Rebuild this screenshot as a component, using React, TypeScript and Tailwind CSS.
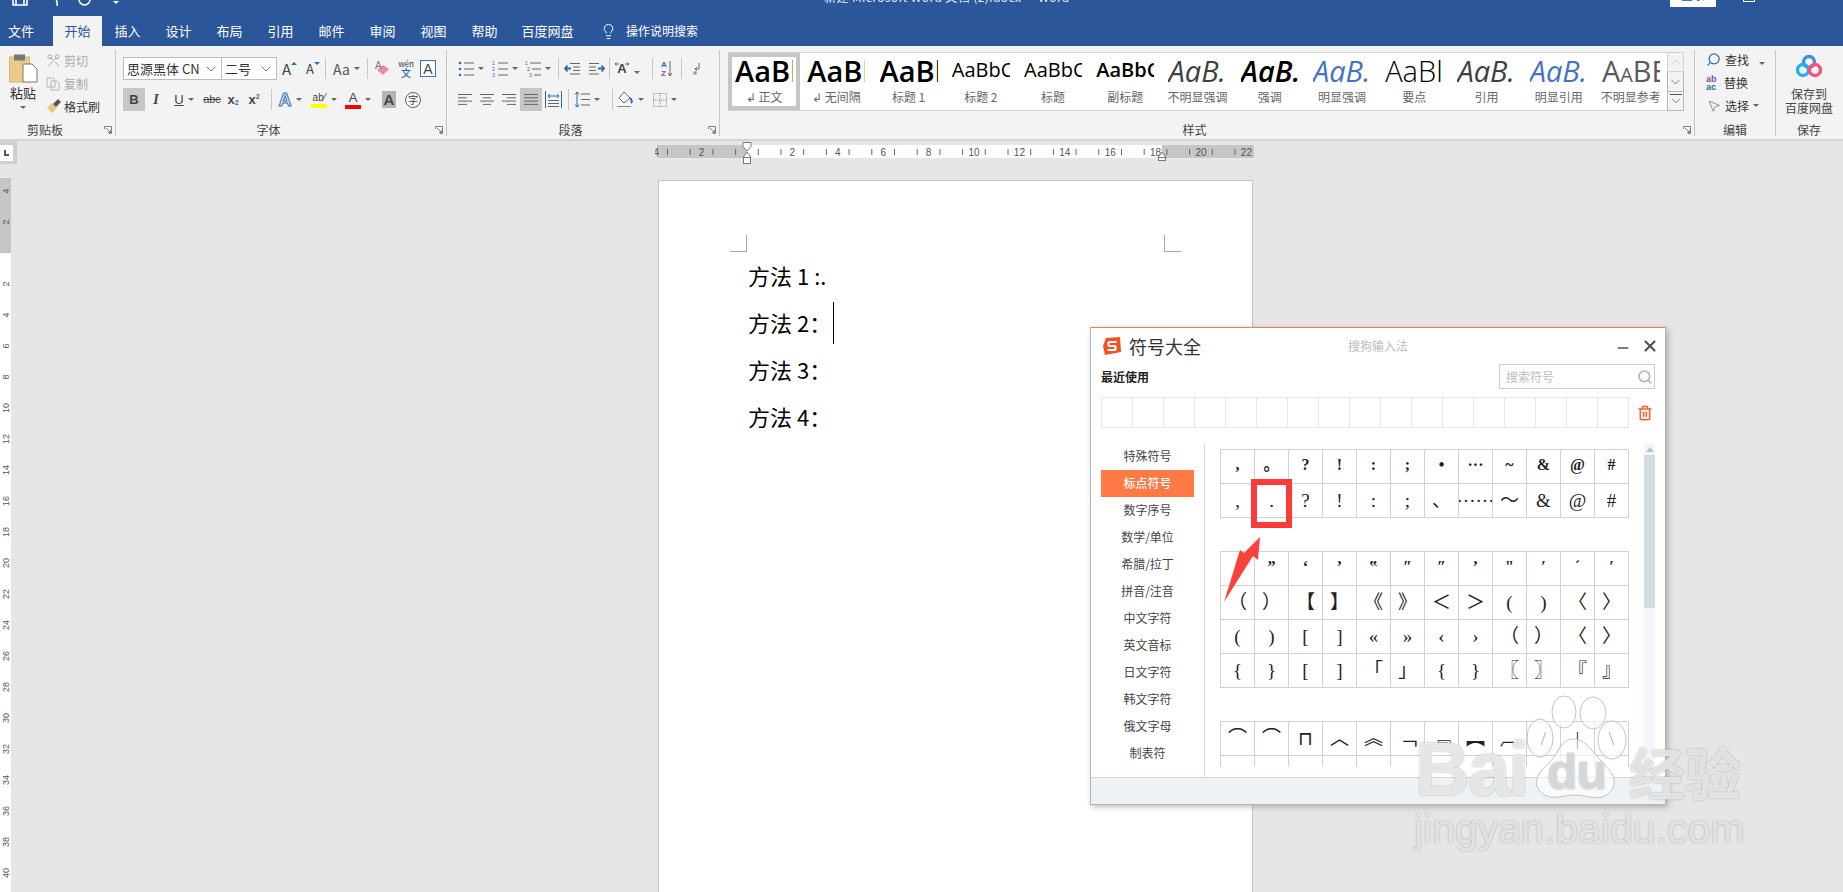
import { Scissors, Search, Trash2, MousePointer2, Lightbulb, ChevronDown, ChevronUp, X, Minus } from 'lucide-react'
import type { ReactNode } from 'react'

const tabs = ['插入', '设计', '布局', '引用', '邮件', '审阅', '视图', '帮助']

const styles = [
  { name: '↲ 正文', text: 'AaBl', cls: 'text-[29px] text-black font-semibold', selected: true },
  { name: '↲ 无间隔', text: 'AaBl', cls: 'text-[29px] text-black font-semibold' },
  { name: '标题 1', text: 'AaBl', cls: 'text-[29px] text-black font-semibold' },
  { name: '标题 2', text: 'AaBbC', cls: 'text-[20px] text-black' },
  { name: '标题', text: 'AaBbC', cls: 'text-[20px] text-black' },
  { name: '副标题', text: 'AaBbC', cls: 'text-[20px] text-black font-semibold' },
  { name: '不明显强调', text: 'AaB.', cls: 'text-[29px] text-[#404040] italic font-medium' },
  { name: '强调', text: 'AaB.', cls: 'text-[29px] text-black italic font-semibold' },
  { name: '明显强调', text: 'AaB.', cls: 'text-[29px] text-[#4472c4] italic font-medium' },
  { name: '要点', text: 'AaBl', cls: 'text-[29px] text-black font-light' },
  { name: '引用', text: 'AaB.', cls: 'text-[29px] text-[#404040] italic font-medium' },
  { name: '明显引用', text: 'AaB.', cls: 'text-[29px] text-[#4472c4] italic font-medium' },
  { name: '不明显参考', text: 'AaBE', cls: 'text-[29px] text-[#595959] font-medium [font-variant:small-caps]' },
]

const sideItems = ['特殊符号', '标点符号', '数字序号', '数学/单位', '希腊/拉丁', '拼音/注音', '中文字符', '英文音标', '日文字符', '韩文字符', '俄文字母', '制表符']

const group1 = [',', '。', '?', '!', ':', ';', '•', '···', '~', '&', '@', '#', ',', '.', '?', '!', ':', ';', '、', '······', '～', '&', '@', '#']
const group2 = ['‘', '”', '‘', '’', '‟', '″', '″', '’', '"', '′', '´', '′', '（', '）', '【', '】', '《', '》', '＜', '＞', '(', ')', '〈', '〉', '(', ')', '[', ']', '«', '»', '‹', '›', '（', '）', '〈', '〉', '{', '}', '[', ']', '「', '」', '{', '}', '〖', '〗', '『', '』']
const group3 = ['⌒', '⌒', '⊓', '︿', '︽', '﹁', '﹃', '︻', '︹', '/', '|', '\\', '', '', '', '', '', '', '', '', '', '', '', '']

function Caret() {
  return <span className="ml-[4px] inline-block h-0 w-0 border-x-[3px] border-t-[3px] border-x-transparent border-t-[#666]" />
}

function Sep({ h = 'h-[21px]' }: { h?: string }) {
  return <div className={`w-px shrink-0 bg-[#c8c8c8] ${h}`} />
}

function Lines({ kind }: { kind: 'left' | 'center' | 'right' | 'full' }) {
  const rows = kind === 'left' ? [[0, 14], [0, 9], [0, 14], [0, 9]] : kind === 'center' ? [[0, 14], [3, 11], [0, 14], [3, 11]] : kind === 'right' ? [[0, 14], [5, 14], [0, 14], [5, 14]] : [[0, 14], [0, 14], [0, 14], [0, 14]]
  return (
    <svg width="14" height="13" stroke="#666" strokeWidth="1">
      {rows.map((r, i) => <line key={i} x1={r[0]} x2={r[1]} y1={1.5 + i * 3.3} y2={1.5 + i * 3.3} />)}
    </svg>
  )
}

function ListIcon({ kind }: { kind: 'bullet' | 'number' | 'multi' }) {
  return (
    <svg width="16" height="16" fontSize="5" fontFamily="Liberation Sans" fill="#2b6cb0">
      {[2, 8, 14].map((y, i) => (
        <g key={y}>
          {kind === 'bullet' && <circle cx="2" cy={y} r="1.3" />}
          {kind === 'number' && <text x="0" y={y + 2}>{i + 1}</text>}
          {kind === 'multi' && <text x={i * 2} y={y + 2}>{i + 1}</text>}
          <line x1={kind === 'multi' ? 5 + i * 2 : 6} x2="16" y1={y} y2={y} stroke="#666" />
        </g>
      ))}
    </svg>
  )
}

function Launcher() {
  return (
    <svg width="8" height="8" className="shrink-0" fill="none" stroke="#666">
      <path d="M0.5 3V0.5H7.5V7.5H5M2 2L6.5 6.5M6.5 4V6.5H4" strokeWidth="0.8" />
    </svg>
  )
}

function Group({ width, label, children }: { width: string; label: string; children: ReactNode }) {
  return (
    <div className={`flex h-[86px] shrink-0 flex-col border-r border-[#c6c6c6] ${width}`}>
      <div className="min-h-0 flex-1">{children}</div>
      <div className="flex h-[14px] items-center pr-[3px] pt-[2px]">
        <span className="flex-1 pr-[14px] text-center text-[12px] leading-none text-[#444]">{label}</span>
        <Launcher />
      </div>
    </div>
  )
}

function Cell({ w, active, children }: { w: string; active?: boolean; children: ReactNode }) {
  return <div className={`flex h-[23px] shrink-0 items-center justify-center ${w} ${active ? 'bg-[#c6c6c6]' : ''}`}>{children}</div>
}

function Ruler() {
  const marks = []
  for (let i = -2; i <= 11; i++) marks.push(i)
  const x0 = 92
  const step = 45.4
  return (
    <svg width="600" height="24" className="block">
      <rect x="2" y="4" width="597" height="13" fill="#c6c6c6" />
      <rect x={x0} y="4" width="415" height="13" fill="#fff" />
      {marks.map((m) => (
        <g key={m}>
          {m !== 0 && (
            <text x={x0 + m * step} y="14.5" fontSize="10" fill="#555" textAnchor="middle" fontFamily="Liberation Sans">{Math.abs(m) * 2}</text>
          )}
          <line x1={x0 + m * step + 11.3} x2={x0 + m * step + 11.3} y1="8" y2="14" stroke="#666" />
          <line x1={x0 + m * step + 34} x2={x0 + m * step + 34} y1="8" y2="14" stroke="#666" />
        </g>
      ))}
      <path d="M88 1.5H96V5.5L92 10L88 5.5Z" fill="#fff" stroke="#777" />
      <path d="M88 16.5L92 11L96 16.5Z" fill="#fff" stroke="#777" />
      <rect x="88.5" y="16.5" width="7" height="6" fill="#fff" stroke="#777" />
      <path d="M503 16.5L507 11L511 16.5Z" fill="#fff" stroke="#777" />
      <rect x="503.5" y="16.5" width="7" height="3" fill="#fff" stroke="#777" />
    </svg>
  )
}

function VRuler() {
  const nums = []
  for (let i = -2; i <= 20; i++) if (i !== 0) nums.push(i)
  return (
    <svg width="11" height="714" className="block">
      <rect width="11" height="75" fill="#c6c6c6" />
      <rect y="75" width="11" height="640" fill="#fff" />
      {nums.map((n) => (
        <text key={n} x="0" y="0" fontSize="9" fill="#555" textAnchor="middle" fontFamily="Liberation Sans" transform={`translate(8.5 ${75 + n * 31}) rotate(-90)`}>{Math.abs(n) * 2}</text>
      ))}
    </svg>
  )
}

function SymbolGrid({ items, bold, big }: { items: string[]; bold?: boolean; big?: number }) {
  return (
    <div className="grid w-[409px] grid-cols-12 border-l border-t border-[#ccd3da]">
      {items.map((s, i) => (
        <div key={i} className={`flex h-[34px] items-center justify-center overflow-hidden border-b border-r border-[#ccd3da] font-['Liberation_Serif','Noto_Sans_CJK_SC',serif] leading-none text-[#222] ${bold && i < 12 ? 'pb-[3px] text-[16px] font-bold' : 'text-[19px]'} ${big !== undefined && i >= big ? 'text-[20px]' : ''}`}>
          {s}
        </div>
      ))}
    </div>
  )
}

function SymbolDialog() {
  return (
    <div className="absolute left-[1090px] top-[327px] flex h-[478px] w-[576px] flex-col border border-[#aeb6bd] border-t-[#ff7a45] bg-white shadow-[2px_2px_6px_rgba(0,0,0,0.25)]">
      <div className="grid h-[36px] shrink-0 grid-cols-[1fr_auto_1fr] items-center">
        <div className="flex items-center pl-[12px]">
          <svg width="18" height="19" viewBox="0 0 18 19">
            <path d="M3 1L17 0L18 15L2 18L0 9Z" fill="#f4511e" />
            <path d="M13.5 5H6.5C5 5 5 9 6.5 9H11.5C13 9 13 13 11.5 13H4.5" fill="none" stroke="#fff" strokeWidth="2.2" />
          </svg>
          <span className="ml-[8px] text-[18px] leading-none text-[#333]">符号大全</span>
        </div>
        <span className="text-[12px] leading-none text-[#bbb]">搜狗输入法</span>
        <div className="flex items-center justify-end pr-[6px]">
          <Minus className="mr-[10px] mt-[3px] h-[16px] w-[16px] text-[#555]" strokeWidth={2.5} />
          <X className="h-[18px] w-[18px] text-[#555]" strokeWidth={3} />
        </div>
      </div>
      <div className="flex h-[25px] shrink-0 items-center justify-between pl-[10px] pr-[10px]">
        <span className="text-[12px] font-bold leading-none text-[#222]">最近使用</span>
        <div className="flex h-[25px] w-[156px] items-center justify-between border border-[#c5ced6] pl-[6px] pr-[1px]">
          <span className="text-[12px] leading-none text-[#bdbdbd]">搜索符号</span>
          <Search className="h-[16px] w-[16px] text-[#b5b5b5]" strokeWidth={2.5} />
        </div>
      </div>
      <div className="mt-[8px] flex shrink-0 items-center pl-[10px]">
        <div className="grid h-[31px] w-[528px] grid-cols-[repeat(17,31px)] border-l border-[#e3e8ed]">
          {Array.from({ length: 17 }, (_, i) => <div key={i} className="border-y border-r border-[#e3e8ed]" />)}
        </div>
        <Trash2 className="ml-[8px] h-[16px] w-[16px] text-[#f4693c]" strokeWidth={2.5} />
      </div>
      <div className="mt-[15px] flex min-h-0 flex-1">
        <div className="w-[114px] shrink-0 border-r border-[#d5dbe0] pl-[10px] pr-[10px]">
          {sideItems.map((s) => (
            <div key={s} className={`flex h-[27px] items-center justify-center pb-[2px] text-[12px] leading-none ${s === '标点符号' ? 'bg-[#ff7a45] font-medium text-white' : 'text-[#444]'}`}>{s}</div>
          ))}
        </div>
        <div className="h-[324px] w-[439px] shrink-0 overflow-hidden pl-[15px] pt-[6px]">
          <SymbolGrid items={group1} bold />
          <div className="h-[33px]" />
          <SymbolGrid items={group2} bold />
          <div className="h-[33px]" />
          <SymbolGrid items={group3} />
        </div>
        <div className="flex w-[11px] shrink-0 flex-col bg-[#f3f6fa]">
          <div className="flex h-[12px] items-center justify-center">
            <span className="h-0 w-0 border-x-[4px] border-b-[5px] border-x-transparent border-b-[#b9c3cb]" />
          </div>
          <div className="h-[153px] bg-[#d3dbdf]" />
        </div>
      </div>
      <div className="h-[27px] shrink-0 border-t border-[#cdd5dc] bg-[#eef2f5]" />
    </div>
  )
}

function Watermark() {
  const shadow = '[text-shadow:0_0_2px_#9a9a9a]'
  return (
    <>
      <svg width="120" height="110" className="absolute left-[1525px] top-[695px]" fill="#ffffff" fillOpacity="0.6" stroke="#b5b5b5" strokeOpacity="0.8">
        <ellipse cx="15" cy="43" rx="13" ry="19" />
        <ellipse cx="39" cy="17" rx="12" ry="16" />
        <ellipse cx="68" cy="18" rx="13" ry="16" />
        <ellipse cx="87" cy="45" rx="14" ry="19" />
        <path d="M48 44C62 44 68 58 78 68C90 80 94 90 82 100C72 106 62 100 50 100C38 100 28 106 18 99C6 90 12 78 24 68C34 58 36 44 48 44Z" />
      </svg>
      <span className={`absolute left-[1415px] top-[727px] font-['Liberation_Sans',sans-serif] text-[76px] font-bold leading-[84px] tracking-[-2px] text-white/75 ${shadow}`}>Bai</span>
      <span className={`absolute left-[1547px] top-[744px] font-['Liberation_Sans',sans-serif] text-[50px] font-bold leading-[56px] tracking-[-1px] text-[#e2e6e8]/80 ${shadow}`}>du</span>
      <span className={`absolute left-[1629px] top-[735px] text-[56px] font-bold leading-[72px] text-white/70 ${shadow}`}>经验</span>
      <span className={`absolute left-[1414px] top-[805px] font-['Liberation_Sans',sans-serif] text-[41px] leading-[48px] text-white/70 ${shadow}`}>jingyan.baidu.com</span>
    </>
  )
}

export default function App() {
  return (
    <div className="relative flex h-[892px] w-[1843px] flex-col overflow-hidden bg-[#e6e6e6] font-['Noto_Sans_CJK_SC','Liberation_Sans',sans-serif]">
      {/* title bar, top is cut off in the shot */}
      <div className="flex h-[16px] shrink-0 items-end overflow-hidden bg-[#2b579a] text-white">
        <div className="flex w-[824px] shrink-0 items-end">
          <svg width="16" height="16" className="mb-[10px] ml-[12px]" fill="none" stroke="#fff" strokeWidth="1.6">
            <path d="M1 1H12L15 4V15H1ZM4 15V9H12V15" />
          </svg>
          <svg width="12" height="12" className="mb-[9px] ml-[19px]" fill="none" stroke="#fff" strokeWidth="1.5">
            <path d="M1 1C8 1 11 5 10 11" />
          </svg>
          <svg width="13" height="13" className="mb-[10px] ml-[19px]" fill="none" stroke="#fff" strokeWidth="1.5">
            <circle cx="6.5" cy="6.5" r="5.5" />
          </svg>
          <span className="mb-[12px] ml-[22px] h-0 w-0 border-x-[3px] border-t-[3px] border-x-transparent border-t-white" />
        </div>
        <div className="mb-[11px] w-[846px] shrink-0 text-[12px] leading-[16px] tracking-[0.4px] whitespace-pre text-[#e8eef6]">新建 Microsoft Word 文档 (2).docx  -  Word</div>
        <div className="mb-[9px] flex h-[24px] w-[46px] shrink-0 items-center justify-center bg-white text-[12px] text-[#2b579a]">登录</div>
        <div className="mb-[14px] ml-[27px] h-[12px] w-[12px] border border-white" />
      </div>

      {/* tabs */}
      <div className="flex h-[30px] shrink-0 items-stretch bg-[#2b579a] text-[13px] text-white">
        <div className="flex w-[42px] items-center justify-center">文件</div>
        <div className="ml-[11px] flex w-[49px] items-center justify-center bg-[#f3f3f3] text-[#2b579a]">开始</div>
        {tabs.map((t) => <div key={t} className="flex w-[51px] items-center justify-center">{t}</div>)}
        <div className="flex w-[75px] items-center justify-center">百度网盘</div>
        <div className="ml-[15px] flex items-center"><Lightbulb className="h-[17px] w-[17px]" strokeWidth={1.4} /></div>
        <div className="ml-[9px] flex items-center text-[12px]">操作说明搜索</div>
      </div>

      {/* ribbon */}
      <div className="flex h-[95px] shrink-0 border-b-2 border-[#d4d4d4] bg-[#f3f3f3] pt-[4px] text-[12px] leading-none text-[#444]">
        <Group width="w-[116px]" label="剪贴板">
          <div className="flex">
            <div className="flex w-[46px] flex-col items-center pt-[3px]">
              <svg width="29" height="30" viewBox="0 0 29 30">
                <rect x="0.5" y="4" width="20" height="25" fill="#eacb8a" stroke="#d9b56c" />
                <rect x="5" y="1.5" width="11" height="6" fill="#777" />
                <path d="M14 11H23L28 16V29H14Z" fill="#fff" stroke="#777" />
              </svg>
              <span className="mt-[3px] text-[13px] text-[#333]">粘贴</span>
              <span className="mt-[7px] h-0 w-0 border-x-[3px] border-t-[3px] border-x-transparent border-t-[#666]" />
            </div>
            <div className="-mt-[1px] flex flex-col">
              <div className="flex h-[23px] items-center text-[#a9a9a9]"><Scissors className="h-[15px] w-[15px] -scale-y-100 rotate-90" strokeWidth={1.5} /><span className="ml-[3px]">剪切</span></div>
              <div className="flex h-[23px] items-center text-[#a9a9a9]">
                <svg width="14" height="14" fill="none" stroke="#b5b5b5"><path d="M1 1H7L9 3V10H1ZM5 4H11L13 6V13H5Z" fill="#f3f3f3" /></svg>
                <span className="ml-[4px]">复制</span>
              </div>
              <div className="flex h-[23px] items-center text-[#333]">
                <svg width="15" height="15" viewBox="0 0 15 15"><path d="M1 9L6 4L11 9L6 14Z" fill="#eac57f" /><path d="M7 5L10 8L15 3L12 0Z" fill="#555" /></svg>
                <span className="ml-[3px]">格式刷</span>
              </div>
            </div>
          </div>
        </Group>

        <Group width="w-[331px]" label="字体">
          <div className="flex h-[30px] items-end pl-[7px]">
            <div className="flex h-[23px] w-[99px] shrink-0 items-center justify-between border border-[#bdbdbd] bg-white pl-[3px] pr-[2px] text-[13px] text-[#333]">
              <span className="whitespace-nowrap">思源黑体 CN</span><ChevronDown className="h-[16px] w-[16px] text-[#555]" strokeWidth={1.2} />
            </div>
            <div className="flex h-[23px] w-[55px] shrink-0 items-center justify-between border border-l-0 border-[#bdbdbd] bg-white pl-[3px] pr-[2px] text-[13px] text-[#333]">
              <span>二号</span><ChevronDown className="h-[16px] w-[16px] text-[#555]" strokeWidth={1.2} />
            </div>
            <Cell w="w-[25px]"><span className="text-[15px]">A</span><span className="mb-[10px] h-0 w-0 border-x-[3px] border-b-[3px] border-x-transparent border-b-[#2b6cb0]" /></Cell>
            <Cell w="w-[22px]"><span className="text-[13px]">A</span><span className="mb-[10px] h-0 w-0 border-x-[3px] border-t-[3px] border-x-transparent border-t-[#2b6cb0]" /></Cell>
            <div className="mb-[1px] ml-[1px]"><Sep /></div>
            <Cell w="w-[41px]"><span className="text-[14px] text-[#555]">Aa</span><Caret /></Cell>
            <div className="mb-[1px]"><Sep /></div>
            <Cell w="w-[28px]">
              <svg width="17" height="17" viewBox="0 0 17 17"><path d="M3 10L9 5L15 9L9 15Z" fill="#f08a9c" /><text x="1" y="9" fontSize="10" fill="#777" fontFamily="Liberation Sans">A</text></svg>
            </Cell>
            <Cell w="w-[20px]">
              <div className="flex flex-col items-center">
                <span className="text-[8px] leading-[9px] text-[#333]">wén</span>
                <span className="text-[10px] font-medium leading-[10px] text-[#2b6cb0]">文</span>
              </div>
            </Cell>
            <Cell w="w-[24px]"><span className="flex h-[17px] w-[16px] items-center justify-center border border-[#3f73b5] bg-white font-['Liberation_Sans',sans-serif] text-[14px] text-[#444]">A</span></Cell>
          </div>
          <div className="mt-[8px] flex items-center pl-[7px] font-['Liberation_Sans',sans-serif]">
            <Cell w="w-[22px]" active><span className="text-[13px] font-bold">B</span></Cell>
            <Cell w="w-[22px]"><span className="font-['Liberation_Serif',serif] text-[14px] font-bold italic">I</span></Cell>
            <Cell w="w-[34px]"><span className="text-[13px] font-medium underline">U</span><Caret /></Cell>
            <Cell w="w-[22px]"><span className="text-[11px] line-through">abc</span></Cell>
            <Cell w="w-[20px]"><span className="text-[13px] font-bold">x</span><span className="mt-[6px] text-[7px] font-bold text-[#2b6cb0]">2</span></Cell>
            <Cell w="w-[22px]"><span className="text-[13px] font-bold">x</span><span className="mb-[6px] text-[7px] font-bold text-[#2b6cb0]">2</span></Cell>
            <div className="ml-[6px] mr-[1px]"><Sep /></div>
            <Cell w="w-[34px]"><span className="text-[18px] font-bold text-[#dbe7f6] [-webkit-text-stroke:1px_#3f73b5]">A</span><Caret /></Cell>
            <Cell w="w-[34px]">
              <div className="flex flex-col items-center">
                <span className="text-[10px] leading-[12px] text-[#444]">ab⁄</span>
                <span className="h-[4px] w-[16px] bg-[#ffff00]" />
              </div>
              <Caret />
            </Cell>
            <Cell w="w-[34px]">
              <div className="flex flex-col items-center">
                <span className="text-[13px] leading-[13px] text-[#444]">A</span>
                <span className="mt-[1px] h-[4px] w-[16px] bg-[#ff0000]" />
              </div>
              <Caret />
            </Cell>
            <Cell w="w-[28px]"><span className="flex h-[17px] w-[14px] items-center justify-center bg-[#b5b5b5] text-[15px] font-bold text-[#444]">A</span></Cell>
            <Cell w="w-[20px]"><span className="flex h-[16px] w-[16px] items-center justify-center rounded-full border border-[#666] font-['Noto_Sans_CJK_SC',sans-serif] text-[10px]">字</span></Cell>
          </div>
        </Group>

        <Group width="w-[273px]" label="段落">
          <div className="flex h-[30px] items-end pl-[7px]">
            <Cell w="w-[34px]"><ListIcon kind="bullet" /><Caret /></Cell>
            <Cell w="w-[34px]"><ListIcon kind="number" /><Caret /></Cell>
            <Cell w="w-[32px]"><ListIcon kind="multi" /><Caret /></Cell>
            <div className="mb-[1px] ml-[4px]"><Sep /></div>
            <Cell w="w-[26px]">
              <svg width="16" height="13" fill="none" stroke="#666"><path d="M6 1.5H16M9 5H16M9 8.5H16M6 12H16" /><path d="M7 6.5H1M3.5 3.5L1 6.5L3.5 9.5" stroke="#2b6cb0" strokeWidth="1.8" /></svg>
            </Cell>
            <Cell w="w-[24px]">
              <svg width="16" height="13" fill="none" stroke="#666"><path d="M0 1.5H10M0 5H7M0 8.5H7M0 12H10" /><path d="M9 6.5H15M12.5 3.5L15 6.5L12.5 9.5" stroke="#2b6cb0" strokeWidth="1.8" /></svg>
            </Cell>
            <div className="mb-[1px]"><Sep /></div>
            <Cell w="w-[34px]">
              <svg width="16" height="15" fill="none"><path d="M1 3H5M1 3L2.5 1.5M1 3L2.5 4.5M11 3H15M15 3L13.5 1.5M15 3L13.5 4.5" stroke="#2b6cb0" /></svg>
              <span className="-ml-[13px] font-['Liberation_Sans',sans-serif] text-[13px] font-bold">A</span>
              <span className="ml-[3px]"><Caret /></span>
            </Cell>
            <div className="mb-[1px] ml-[8px]"><Sep /></div>
            <Cell w="w-[28px]">
              <div className="flex items-center">
                <div className="flex flex-col font-['Liberation_Sans',sans-serif] text-[8px] font-bold leading-[9px]"><span className="text-[#2b6cb0]">A</span><span className="text-[#8a4fb5]">Z</span></div>
                <svg width="6" height="16" fill="none" stroke="#666"><path d="M3 0V15M1 12L3 15L5 12" /></svg>
              </div>
            </Cell>
            <div className="mb-[1px]"><Sep /></div>
            <Cell w="w-[30px]">
              <svg width="12" height="14" fill="none" stroke="#666"><path d="M8 1V7H4M6 5L4 7L6 9" /><path d="M4 13V9M2 11H6" stroke="#777" /></svg>
            </Cell>
          </div>
          <div className="mt-[8px] flex items-center pl-[7px]">
            <Cell w="w-[22px]"><Lines kind="left" /></Cell>
            <Cell w="w-[22px]"><Lines kind="center" /></Cell>
            <Cell w="w-[22px]"><Lines kind="right" /></Cell>
            <Cell w="w-[22px]" active><Lines kind="full" /></Cell>
            <Cell w="w-[22px]">
              <svg width="17" height="17" fill="none" stroke="#2b6cb0"><path d="M0.5 0V17M16.5 0V17" /><path d="M3 5H14M5 3L3 5L5 7M12 3L14 5L12 7" /><path d="M3 9.5H14M3 12.5H14M3 15.5H14" stroke="#666" /></svg>
            </Cell>
            <div className="ml-[4px]"><Sep /></div>
            <Cell w="w-[36px]">
              <svg width="16" height="17" fill="none"><path d="M3 1V16M1 3.5L3 1L5 3.5M1 13.5L3 16L5 13.5" stroke="#2b6cb0" /><path d="M7 3H16M7 8.5H16M7 14H16" stroke="#666" /></svg>
              <Caret />
            </Cell>
            <div className="ml-[7px]"><Sep /></div>
            <Cell w="w-[34px]">
              <svg width="17" height="17" fill="none"><path d="M7 1L13 7L7 12L2 7Z" stroke="#666" fill="#fff" /><path d="M13 7C15 9 15 11 14 12" stroke="#2b6cb0" strokeWidth="2" /><path d="M0 15.5H14" stroke="#888" /></svg>
              <Caret />
            </Cell>
            <Cell w="w-[36px]">
              <svg width="14" height="14" fill="none" stroke="#888" strokeDasharray="1 1"><rect x="0.5" y="0.5" width="13" height="13" /><path d="M7 0V14M0 7H14" /></svg>
              <Caret />
            </Cell>
          </div>
        </Group>

        <Group width="w-[975px]" label="样式">
          <div className="ml-[8px] mt-[2px] flex">
            <div className="grid h-[59px] w-[939px] grid-cols-[repeat(13,1fr)] border-y border-[#d4d4d4] bg-white">
              {styles.map((s) => (
                <div key={s.name} className={`flex min-w-0 flex-col items-center ${s.selected ? 'border-[4px] border-[#c6c6c6]' : 'border-[4px] border-transparent'}`}>
                  <div className={`-mt-[2px] flex h-[30px] w-[58px] items-center justify-start overflow-hidden whitespace-nowrap font-['Open_Sans','Liberation_Sans',sans-serif] leading-none ${s.cls}`}>{s.text}</div>
                  <div className="mt-[6px] whitespace-nowrap text-[12px] leading-none text-[#666]">{s.name}</div>
                </div>
              ))}
            </div>
            <div className="flex h-[59px] w-[17px] shrink-0 flex-col">
              <div className="flex h-[20px] items-center justify-center border border-[#d4d4d4] bg-[#f3f3f3]"><ChevronUp className="h-[16px] w-[16px] text-[#c6c6c6]" strokeWidth={1.2} /></div>
              <div className="flex h-[20px] items-center justify-center border-x border-b border-[#b5b5b5] bg-[#f3f3f3]"><ChevronDown className="h-[16px] w-[16px] text-[#555]" strokeWidth={1.2} /></div>
              <div className="flex h-[19px] flex-col items-center border-x border-b border-[#b5b5b5] bg-[#f3f3f3]">
                <span className="mt-[2px] h-px w-[12px] bg-[#555]" />
                <ChevronDown className="-mt-[1px] h-[14px] w-[16px] text-[#555]" strokeWidth={1.2} />
              </div>
            </div>
          </div>
        </Group>

        <div className="flex h-[86px] w-[81px] shrink-0 flex-col border-r border-[#c6c6c6]">
          <div className="-mt-[2px] flex-1 pl-[11px] text-[#333]">
            <div className="flex h-[23px] items-center"><Search className="h-[15px] w-[15px] -scale-x-100 text-[#2b6cb0]" strokeWidth={2} /><span className="ml-[4px]">查找</span><span className="ml-[6px]"><Caret /></span></div>
            <div className="flex h-[23px] items-center">
              <div className="flex w-[15px] flex-col font-['Liberation_Sans',sans-serif] text-[9px] font-bold leading-[8px]"><span className="text-[#7b4fa5]">ab</span><span className="text-[#2b6cb0]">ac</span></div>
              <span className="ml-[3px]">替换</span>
            </div>
            <div className="flex h-[23px] items-center pl-[1px]"><MousePointer2 className="h-[14px] w-[14px] text-[#666]" strokeWidth={1.2} /><span className="ml-[4px]">选择</span><Caret /></div>
          </div>
          <div className="h-[14px] pt-[1px] text-center leading-[14px]">编辑</div>
        </div>

        <div className="flex h-[86px] w-[66px] shrink-0 flex-col items-center">
          <div className="flex flex-1 flex-col items-center text-[#444]">
            <svg width="26" height="24" viewBox="0 0 26 24" className="mt-[4px]" fill="none" strokeWidth="3.4">
              <circle cx="13" cy="8" r="5.5" stroke="#3f8fe0" />
              <circle cx="7" cy="16" r="5.5" stroke="#23b5e8" />
              <circle cx="19" cy="16" r="5.5" stroke="#f2557a" />
            </svg>
            <span className="mt-[9px] text-[12px] leading-[14px]">保存到</span>
            <span className="text-[12px] leading-[14px]">百度网盘</span>
          </div>
          <div className="h-[14px] pt-[1px] leading-[14px]">保存</div>
        </div>
      </div>

      {/* document area */}
      <div className="flex min-h-0 flex-1">
        <div className="flex w-[17px] shrink-0 flex-col">
          <div className="flex h-[23px] w-[17px] items-center bg-[#d0d0d0]">
            <div className="flex h-[16px] w-[13px] items-center justify-center bg-white">
              <span className="h-[6px] w-[5px] border-b-2 border-l-2 border-[#555]" />
            </div>
          </div>
          <div className="mt-[14px]"><VRuler /></div>
        </div>
        <div className="flex min-w-0 flex-1 flex-col pl-[638px]">
          <Ruler />
          <div className="ml-[3px] mt-[15px] flex-1 w-[595px] border-x border-t border-[#c6c6c6] bg-white pl-[71px]">
            <div className="mt-[54px] flex w-[451px] justify-between">
              <div className="h-[17px] w-[17px] border-b border-r border-[#a8a8a8]" />
              <div className="h-[17px] w-[17px] border-b border-l border-[#a8a8a8]" />
            </div>
            <div className="pl-[18px] text-[22px] text-black">
              <div className="flex h-[47px] items-center whitespace-pre">方法 1<span className="ml-[5px]">:</span>.</div>
              <div className="flex h-[47px] items-center whitespace-pre">方法 2：<span className="ml-[2px] h-[42px] w-px bg-black" /></div>
              <div className="flex h-[47px] items-center whitespace-pre">方法 3：</div>
              <div className="flex h-[47px] items-center whitespace-pre">方法 4：</div>
            </div>
          </div>
        </div>
      </div>

      <SymbolDialog />

      {/* red annotation */}
      <div className="absolute left-[1251px] top-[479px] h-[49px] w-[41px] border-[6px] border-[#fd3a3a]" />
      <svg width="44" height="72" className="absolute left-[1220px] top-[534px]">
        <path d="M40 3L38 26L33 22L4 68L20 16L24 19Z" fill="#f9423a" />
      </svg>

      <Watermark />
    </div>
  )
}
